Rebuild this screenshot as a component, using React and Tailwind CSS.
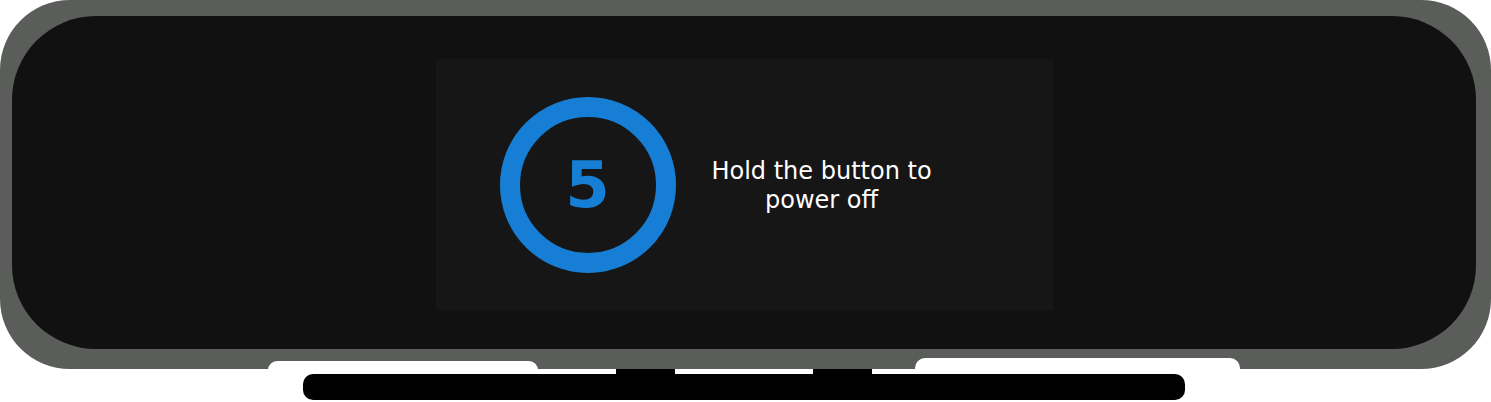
export default function App() {
  return (
    <div className="relative w-[1491px] h-[402px] bg-white overflow-hidden" style={{ fontFamily: '"DejaVu Sans", "Liberation Sans", sans-serif' }}>
      <div className="h-[369px] w-[1491px] rounded-[70px] bg-[#5b5d5b] pt-[16px] pl-[12px] pr-[15px] pb-[20px]">
        <div className="h-full w-full rounded-[84px] bg-[#111111] flex flex-col items-center pt-[43px]">
          <div className="w-[617px] h-[251px] bg-[#171617] flex items-center pl-[64px]">
            <div className="w-[176px] h-[176px] shrink-0 rounded-full border-[20px] border-[#167fd5] flex items-center justify-center">
              <span className="text-[64px] leading-none font-bold text-[#167fd5]">5</span>
            </div>
            <div className="w-[292px] shrink-0 mt-[2px] text-center text-white text-[24px] leading-[29px]">
              Hold the button to
              <br />
              power off
            </div>
          </div>
        </div>
      </div>
      <div className="absolute left-[268px] top-[361px] w-[270px] h-[12px] bg-white rounded-t-[9px]" />
      <div className="absolute left-[915px] top-[358px] w-[325px] h-[15px] bg-white rounded-t-[10px]" />
      <div className="flex h-[5px]">
        <div className="ml-[616px] w-[59px] h-full bg-black" />
        <div className="ml-[138px] w-[59px] h-full bg-black" />
      </div>
      <div className="ml-[303px] w-[882px] h-[26px] rounded-[10px] bg-black" />
    </div>
  );
}
